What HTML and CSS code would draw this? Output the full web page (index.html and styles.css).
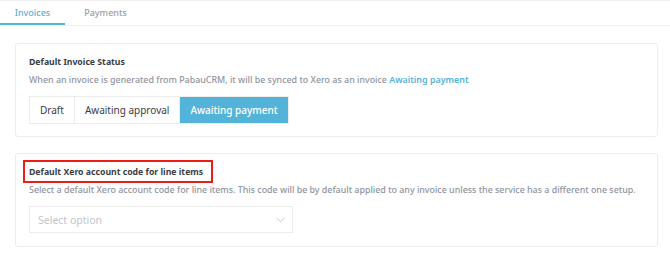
FILE: index.html
```html
<!DOCTYPE html>
<html lang="en">
<head>
    <meta charset="UTF-8">
    <title>Xero Settings</title>
    <link rel="stylesheet" href="styles.css">
</head>
<body>
    <div class="tabs">
        <div class="tab active">Invoices</div>
        <div class="tab">Payments</div>
    </div>

    <div class="content">
        <div class="card">
            <div class="card-title">Default Invoice Status</div>
            <div class="card-desc">When an invoice is generated from PabauCRM, it will be synced to Xero as an invoice <span class="link">Awaiting payment</span></div>
            <div class="btn-group">
                <div class="btn">Draft</div>
                <div class="btn">Awaiting approval</div>
                <div class="btn selected">Awaiting payment</div>
            </div>
        </div>

        <div class="card">
            <div class="card-title highlighted">Default Xero account code for line items</div>
            <div class="card-desc">Select a default Xero account code for line items. This code will be by default applied to any invoice unless the service has a different one setup.</div>
            <div class="select">
                <span>Select option</span>
                <svg width="9" height="6" viewBox="0 0 9 6"><path d="M0.5 0.8 L4.5 4.8 L8.5 0.8" fill="none" stroke="#c4c7cc" stroke-width="1"/></svg>
            </div>
        </div>
    </div>
</body>
</html>
```

FILE: styles.css
```css
body {
    margin: 0;
    font-family: "Noto Sans", Arial, sans-serif;
    background: #fff;
    color: #3a3d44;
}
.tabs {
    display: flex;
    height: 26px;
    border-top: 1px solid #f0f0f0;
    border-bottom: 1px solid #f0f0f0;
    box-sizing: border-box;
}
.tab {
    width: 65px;
    text-align: center;
    font-size: 9px;
    line-height: 24px;
    color: #9a9ea6;
    font-weight: 500;
}
.tab.active {
    color: #54b3d9;
    border-bottom: 2px solid #54b3d9;
}
.tab + .tab {
    margin-left: 8px;
}
.content {
    padding: 17px 12px 0 15px;
    display: flex;
    flex-direction: column;
    gap: 16px;
}
.card {
    border: 1px solid #ececec;
    border-radius: 3px;
    padding: 12px 14px 13px 13px;
    height: 94px;
    box-sizing: border-box;
    display: flex;
    flex-direction: column;
    align-items: flex-start;
}
.card-title {
    font-size: 8.7px;
    font-weight: 700;
    color: #3a3d44;
    line-height: 12px;
    position: relative;
}
.card-title.highlighted::after {
    content: "";
    position: absolute;
    left: -6px;
    top: -6px;
    right: -10px;
    bottom: -5px;
    border: 2px solid #ee1c16;
}
.card-desc {
    font-size: 8.9px;
    font-weight: 500;
    color: #90949c;
    line-height: 12px;
    margin-top: 6px;
}
.link {
    color: #54b3d9;
    font-weight: 600;
}
.btn-group {
    display: flex;
    margin-top: 10px;
    border: 1px solid #ececec;
}
.btn {
    font-size: 10px;
    line-height: 26px;
    padding: 0 10px;
    color: #3a3d44;
}
.btn + .btn {
    border-left: 1px solid #ececec;
}
.btn.selected {
    background: #54b3d9;
    color: #fff;
    font-weight: 500;
}
.select {
    margin-top: 10px;
    width: 264px;
    height: 27px;
    box-sizing: border-box;
    border: 1px solid #ececec;
    display: flex;
    align-items: center;
    justify-content: space-between;
    padding: 0 7px 0 8px;
    font-size: 10.5px;
    color: #c2c5ca;
}
```
